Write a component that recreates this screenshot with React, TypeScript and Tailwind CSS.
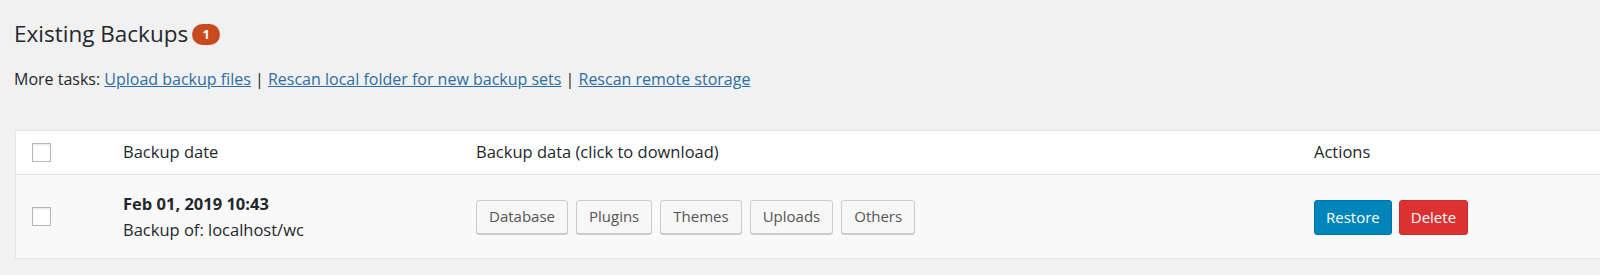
const font = { fontFamily: '"Open Sans", "Noto Sans", sans-serif' }

function Checkbox() {
  return <span className="block w-[19px] h-[19px] border border-[#b4b9be] bg-white shadow-[inset_0_1px_2px_rgba(0,0,0,0.1)]" />
}

const dataButtons = ['Database', 'Plugins', 'Themes', 'Uploads', 'Others']

export default function App() {
  return (
    <div className="w-[1600px] h-[275px] bg-[#f1f1f1] text-[#23282d] overflow-hidden" style={font}>
      {/* Heading */}
      <div className="flex items-center pl-[14px] pt-[21px] h-[48px]">
        <h2 className="text-[22.5px] leading-none font-normal">Existing Backups</h2>
        <span className="ml-[4px] w-[28px] h-[21px] rounded-full bg-[#ca4a1f] text-white text-[13px] font-bold flex items-center justify-center">1</span>
      </div>

      {/* More tasks */}
      <p className="pl-[14px] mt-[19px] text-[16px] leading-[24px] text-[#23282d]">
        More tasks:{' '}
        <a className="text-[#2e6da4] underline">Upload backup files</a>
        {' | '}
        <a className="text-[#2e6da4] underline">Rescan local folder for new backup sets</a>
        {' | '}
        <a className="text-[#2e6da4] underline">Rescan remote storage</a>
      </p>

      {/* Table */}
      <div className="ml-[15px] mt-[39px] border border-[#e5e5e5] border-r-0 bg-white">
        <div className="flex items-center h-[44px] border-b border-[#e1e1e1] text-[16.5px]">
          <div className="w-[107px] pl-[16px] shrink-0"><Checkbox /></div>
          <div className="w-[353px] shrink-0">Backup date</div>
          <div className="w-[838px] shrink-0">Backup data (click to download)</div>
          <div>Actions</div>
        </div>
        <div className="flex items-center h-[83px] bg-[#f9f9f9] text-[16.5px]">
          <div className="w-[107px] pl-[16px] shrink-0"><Checkbox /></div>
          <div className="w-[353px] shrink-0 leading-[26px]">
            <div className="font-bold">Feb 01, 2019 10:43</div>
            <div>Backup of: localhost/wc</div>
          </div>
          <div className="w-[838px] shrink-0 flex gap-[8px]">
            {dataButtons.map(b => (
              <button
                key={b}
                className="h-[34px] px-[12px] rounded-[3px] border border-[#cccccc] bg-[#f7f7f7] text-[15px] text-[#555555] shadow-[0_1px_0_#cccccc]"
              >
                {b}
              </button>
            ))}
          </div>
          <div className="flex gap-[7px] pt-[2px]">
            <button className="h-[35px] px-[11px] rounded-[3px] bg-[#0085ba] border border-[#0073aa] text-white text-[15px]">Restore</button>
            <button className="h-[35px] px-[11px] rounded-[3px] bg-[#dc3232] border border-[#c92c2c] text-white text-[15px]">Delete</button>
          </div>
        </div>
      </div>
    </div>
  )
}
